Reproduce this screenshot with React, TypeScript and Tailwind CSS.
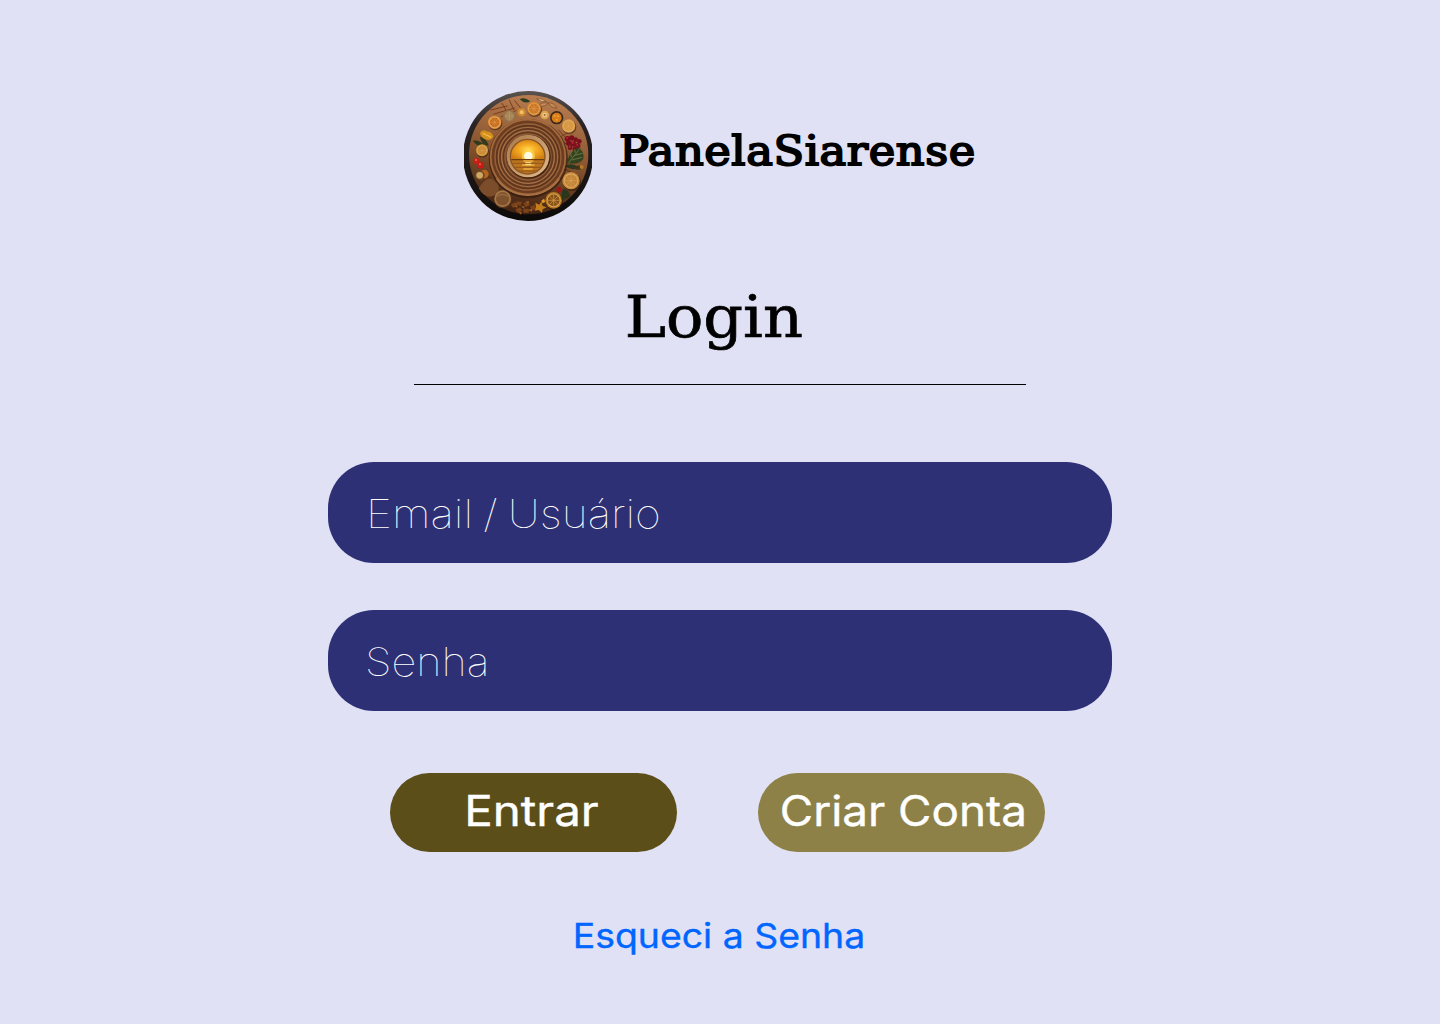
import React from "react";

const rings = [
  { r: 112, c: "#a56a3c", w: 5 },
  { r: 105, c: "#6b3c20", w: 5 },
  { r: 99, c: "#95603a", w: 4 },
  { r: 94, c: "#5b331b", w: 4 },
  { r: 89, c: "#a06a40", w: 4 },
  { r: 84, c: "#633820", w: 4 },
  { r: 79, c: "#a9744a", w: 4 },
  { r: 74, c: "#633820", w: 4 },
  { r: 69, c: "#8d5b38", w: 4 },
];

function Slice({ x, y, r, rind, flesh }: { x: number; y: number; r: number; rind: string; flesh: string }) {
  return (
    <g transform={`translate(${x} ${y}) scale(${r / 20})`}>
      <circle cx="2" cy="3" r="21" fill="#2c170b" opacity="0.55" />
      <circle r="20" fill={rind} />
      <circle r="16.5" fill="#dcae68" />
      <circle r="14.5" fill={flesh} />
      <path d="M0-15V15M-15 0H15M-10.5-10.5 10.5 10.5M10.5-10.5-10.5 10.5" stroke="#dba55c" strokeWidth="1.3" />
    </g>
  );
}

function Logo() {
  return (
    <svg className="h-[130px] w-[128px] shrink-0" viewBox="18 15 384 390" aria-label="PanelaSiarense" role="img">
      <defs>
        <linearGradient id="rim" x1="0" y1="0" x2="0" y2="1">
          <stop offset="0" stopColor="#5a5350" />
          <stop offset="0.25" stopColor="#2a2524" />
          <stop offset="1" stopColor="#0c0909" />
        </linearGradient>
        <linearGradient id="wood" x1="0.6" y1="0" x2="0.4" y2="1">
          <stop offset="0" stopColor="#b97d50" />
          <stop offset="0.5" stopColor="#89552f" />
          <stop offset="1" stopColor="#3e2010" />
        </linearGradient>
        <linearGradient id="bowl" x1="0" y1="0" x2="1" y2="1">
          <stop offset="0" stopColor="#a87748" />
          <stop offset="1" stopColor="#e2bc8c" />
        </linearGradient>
        <radialGradient id="sky" cx="0.5" cy="0.5" r="0.55">
          <stop offset="0" stopColor="#ffdc59" />
          <stop offset="0.4" stopColor="#f8ae25" />
          <stop offset="1" stopColor="#cf7c12" />
        </radialGradient>
        <clipPath id="sun">
          <circle cx="209" cy="212" r="50" />
        </clipPath>
      </defs>
      <circle cx="210" cy="210" r="195" fill="url(#rim)" />
      <circle cx="212" cy="206" r="179" fill="url(#wood)" />

      <g stroke="#7a3d1e" strokeWidth="3" strokeLinecap="round" fill="none">
        <path d="M98 72l50-12M108 84l62-18M130 92l44-18M132 52l16 28M154 42l14 30M170 44l18 22" />
        <path d="M312 150l18-10M302 132l22 24" />
      </g>
      <g stroke="#4e2711" strokeWidth="3" strokeLinecap="round" opacity="0.8">
        <path d="M320 170l16 14M322 250l16 8M278 304l26-16M84 260l18 26" />
      </g>

      <path d="M185 40q14-8 32 6q-16 10-32-6z" fill="#2b3c20" />
      <path d="M236 39q14 10 30 8q-14-12-30-8z" fill="#e6c29a" stroke="#7a4926" strokeWidth="2" />
      <path d="M240 60q12-14 30-8q-8 12-30 8zM270 50q20 0 26 17q-18-2-26-17z" fill="#c58b55" stroke="#7a4926" strokeWidth="2" />
      <path d="M44 164q18-4 42 16q-24 8-42-16zM66 152q20 4 26 28q-24-6-26-28z" fill="#2f3a1e" />

      <Slice x={228} y={68} r={21} rind="#d88a2e" flesh="#cf7624" />
      <Slice x={110} y={109} r={20} rind="#e3933a" flesh="#c96a1c" />
      <Slice x={332} y={120} r={20} rind="#dfa04a" flesh="#d99740" />
      <Slice x={72} y={193} r={18} rind="#d79a35" flesh="#c98a35" />
      <Slice x={339} y={284} r={26} rind="#c98a3a" flesh="#c48436" />
      <Slice x={287} y={343} r={25} rind="#b8761f" flesh="#8a5316" />
      <circle cx="154" cy="90" r="19" fill="#94714a" />
      <circle cx="154" cy="90" r="14" fill="#a68556" />
      <path d="M154 76v28M140 90h28" stroke="#bd9b6c" strokeWidth="2" />
      <circle cx="191" cy="79" r="12" fill="#d08a2c" />
      <circle cx="191" cy="79" r="6" fill="#edc272" />
      <circle cx="260" cy="87" r="13" fill="#dba453" />
      <circle cx="260" cy="87" r="7" fill="#efc987" />
      <circle cx="260" cy="87" r="3" fill="#a2642c" />
      <circle cx="296" cy="95" r="20" fill="#38291f" />
      <circle cx="296" cy="95" r="15" fill="#d87b19" />
      <g fill="#f3a43a">
        <circle cx="290" cy="90" r="3" />
        <circle cx="300" cy="91" r="3" />
        <circle cx="296" cy="101" r="3" />
      </g>
      <path d="M66 140q10-12 20-4q18 2 20 16q-8 14-24 8q-14-6-16-20z" fill="#d58f1c" />
      <path d="M74 142q14 6 26 12" stroke="#efb945" strokeWidth="4" fill="none" />

      <g fill="#7d0f1d">
        <circle cx="328" cy="158" r="8" />
        <circle cx="341" cy="156" r="8" />
        <circle cx="353" cy="161" r="7" />
        <circle cx="364" cy="166" r="7" />
        <circle cx="332" cy="171" r="8" />
        <circle cx="346" cy="174" r="8" />
        <circle cx="359" cy="179" r="8" />
        <circle cx="336" cy="185" r="7" />
        <circle cx="350" cy="189" r="7" />
      </g>
      <g fill="#b5263a">
        <circle cx="327" cy="156" r="3" />
        <circle cx="344" cy="171" r="3" />
        <circle cx="358" cy="177" r="3" />
        <circle cx="335" cy="183" r="3" />
      </g>
      <path d="M328 232q0-28 32-48q20 12 16 34q-12 20-48 14z" fill="#34421f" />
      <path d="M332 230q16-20 32-40M342 222l30-8M340 214l-2-14M350 208l24-6M352 200l-2-10" stroke="#66743f" strokeWidth="3" fill="none" />
      <path d="M320 240q18-12 42 2q-16 16-42-2z" fill="#2b381b" />
      <path d="M346 246q14-14 30-2q-10 14-30 2z" fill="#3b3417" />
      <circle cx="371" cy="243" r="6" fill="#b87b24" />
      <path d="M316 308q20 4 20 24q-16 6-24 12q-4-20 4-36z" fill="#2b361b" />
      <circle cx="303" cy="311" r="8" fill="#9c1718" />

      <circle cx="56" cy="225" r="9" fill="#cc1f14" />
      <circle cx="68" cy="238" r="10" fill="#c81b14" />
      <circle cx="54" cy="222" r="3" fill="#ee6a50" />
      <circle cx="66" cy="235" r="3" fill="#ee6a50" />
      <circle cx="79" cy="264" r="13" fill="#b9651b" />
      <circle cx="66" cy="268" r="14" fill="#6e4a22" />
      <circle cx="65" cy="268" r="10" fill="#cda766" />
      <path d="M62 306q26-38 44-24q24 16 14 40q-36 26-58-16z" fill="#7b4d2a" />
      <circle cx="135" cy="340" r="27" fill="#5b351b" />
      <circle cx="134" cy="338" r="25" fill="#a87848" />
      <circle cx="134" cy="338" r="20" fill="#7d522d" />
      <path d="M116 332q18-14 36 0" stroke="#94693f" strokeWidth="5" fill="none" />

      <g fill="#7c421a">
        <path d="M158 356l14-8 6 10-12 8zM176 346l16 2-4 12-14-4zM196 352l14-6 6 12-14 6zM172 370l14-6 8 10-16 6zM196 368l16 0 0 12-16 0zM216 362l14-6 4 12-12 6z" />
      </g>
      <g fill="#9c5822">
        <path d="M168 360l10-2 0 8zM188 362l10-2 2 8zM210 372l12-4 0 10zM182 378l10 0-4 8zM204 346l10 0-4 8z" />
      </g>
      <path d="M232 350l12 6 6-10 4 14 12 4-12 6-2 10-10-8-12 2 4-10z" fill="#c47d1b" />
      <path d="M250 344l8-6 4 10-8 4z" fill="#e09b2b" />

      <circle cx="211" cy="218" r="119" fill="#2c150a" opacity="0.6" />
      <circle cx="210" cy="214" r="115" fill="#714222" />
      {rings.map((ring) => (
        <circle key={ring.r} cx="210" cy="213" r={ring.r} fill="none" stroke={ring.c} strokeWidth={ring.w} />
      ))}
      <path d="M116 279A115 115 0 0 0 304 279" fill="none" stroke="#a97347" strokeWidth="4" />
      <circle cx="212" cy="212" r="66" fill="#42210f" />
      <circle cx="210" cy="210" r="64" fill="url(#bowl)" />
      <circle cx="209" cy="212" r="54" fill="#8a5524" />
      <g clipPath="url(#sun)">
        <rect x="155" y="160" width="110" height="62" fill="url(#sky)" />
        <circle cx="211" cy="210" r="20" fill="#ffd54b" opacity="0.7" />
        <circle cx="211" cy="210" r="13" fill="#fffbe0" />
        <rect x="155" y="220" width="110" height="50" fill="#bb7420" />
        <path d="M155 221h110" stroke="#6b3c12" strokeWidth="4" />
        <path d="M160 232h98M165 244h88M175 255h70" stroke="#935718" strokeWidth="3" />
        <path d="M196 225h30M192 237h38M196 249h28" stroke="#efae3c" strokeWidth="4" />
        <path d="M202 230h18M202 236h18" stroke="#ffe38a" strokeWidth="3" />
      </g>
    </svg>
  );
}

export default function App() {
  return (
    <main className="flex h-[1024px] w-full flex-col items-center overflow-hidden bg-[#e1e1f5] pt-[91px] font-['Inter',sans-serif] whitespace-nowrap">
      <header className="flex w-[512px] items-start gap-[27px]">
        <Logo />
        <span className="origin-left scale-x-[1.09] pt-[30px] font-['DejaVu_Serif',serif] text-[41px] leading-[60px] tracking-[0.55px] text-black [-webkit-text-stroke:1.9px_black]">
          PanelaSiarense
        </span>
      </header>

      <section className="mt-[56px] flex h-[108px] w-[612px] justify-center border-b border-black pr-[13px]">
        <h1 className="scale-x-[1.09] font-['DejaVu_Serif',serif] text-[57px] leading-[80px] text-black [-webkit-text-stroke:0.7px_black]">
          Login
        </h1>
      </section>

      <form className="mt-[77px] flex w-[784px] flex-col">
        <label className="flex h-[101px] items-center rounded-[46px] bg-[#2d3074] pt-[3px] pl-[38px] text-[39px] font-thin text-white">
          <span className="origin-left scale-x-[1.14] [word-spacing:-2px]">Email / Usuário</span>
        </label>
        <label className="mt-[47px] flex h-[101px] items-center rounded-[46px] bg-[#2d3074] pt-[3px] pl-[37px] text-[39px] font-thin text-white">
          <span className="origin-left scale-x-[1.11]">Senha</span>
        </label>
        <div className="mt-[62px] flex gap-[81px] pl-[62px]">
          <button type="button" className="flex h-[79px] w-[287px] items-center justify-center rounded-full bg-[#5b4e19] pr-[4px] pb-[4px] text-[42px] font-normal text-white [-webkit-text-stroke:0.4px_white]">
            <span className="scale-x-[1.13]">Entrar</span>
          </button>
          <button type="button" className="flex h-[79px] w-[287px] items-center justify-center rounded-full bg-[#8e8147] pb-[4px] pl-[4px] text-[42px] font-normal text-white [-webkit-text-stroke:0.4px_white]">
            <span className="scale-x-[1.09]">Criar Conta</span>
          </button>
        </div>
      </form>

      <a className="mt-[60px] mr-[2px] scale-x-[1.1] text-[34px] leading-[48px] font-normal text-[#0066ff] [-webkit-text-stroke:0.35px_#0066ff]">
        Esqueci a Senha
      </a>
    </main>
  );
}
